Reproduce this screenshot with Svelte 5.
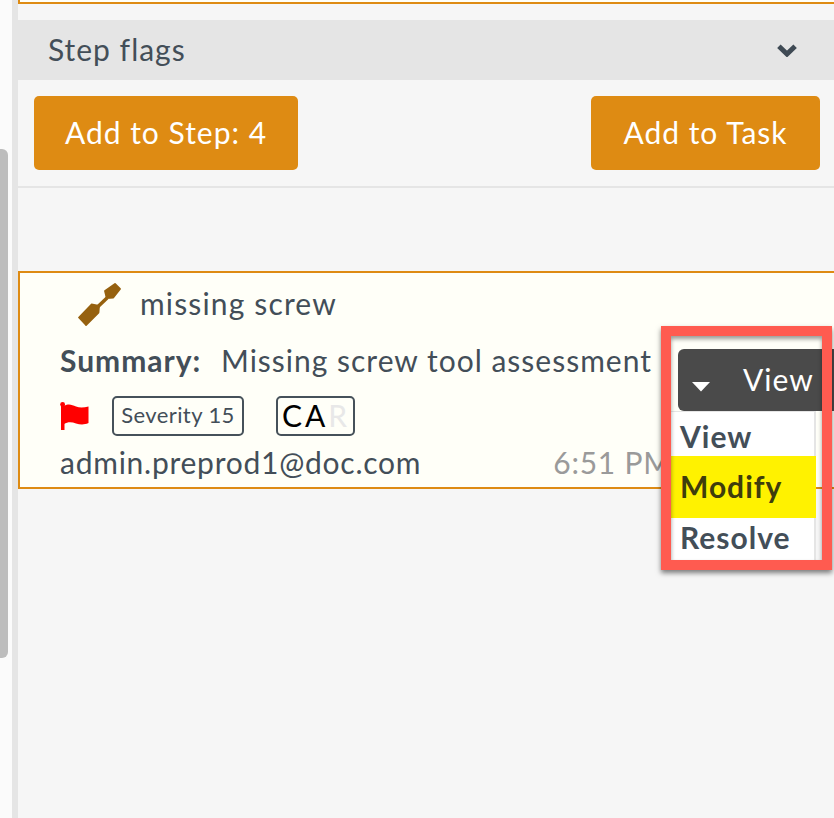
<script>
  const menuItems = ['View', 'Modify', 'Resolve']
</script>

<div class="page">
  <aside class="rail">
    <div class="scroll-thumb"></div>
  </aside>

  <main class="panel">
    <div class="prev-card"></div>

    <header class="section-head">
      <span>Step flags</span>
      <svg class="chevron" viewBox="0 0 20 14" width="20" height="14" aria-hidden="true">
        <path d="M1.9 3.2 L10 11 L18.1 3.2" fill="none" stroke="#3f4a54" stroke-width="5" />
      </svg>
    </header>

    <div class="actions">
      <button type="button" class="btn-add step">Add to Step: 4</button>
      <button type="button" class="btn-add task">Add to Task</button>
    </div>

    <section class="flag-card">
      <div class="title-row">
        <svg class="tool" viewBox="0 0 44 44" width="44" height="44" aria-hidden="true">
          <path d="M1 34.5 L13.5 21.5 L21 23 L20.5 29.5 L8 42 Z" fill="#96610f" stroke="#96610f" stroke-width="1.8" stroke-linejoin="round" />
          <path d="M19 24.5 L29 15" stroke="#96610f" stroke-width="3.6" />
          <path d="M27 8 L37 1 L42 6 L35.3 14.5 L28.7 15 Z" fill="#96610f" stroke="#96610f" stroke-width="1.8" stroke-linejoin="round" />
        </svg>
        <span>missing screw</span>
      </div>

      <p class="summary"><strong>Summary:</strong> Missing screw tool assessment</p>

      <div class="tags">
        <svg class="flag" viewBox="0 0 29 29" width="29" height="29" aria-hidden="true">
          <path d="M1 2 H4.5 V28 H1 Z" fill="#ff0000" />
          <circle cx="2.6" cy="2.4" r="2.4" fill="#ff0000" />
          <path d="M4 4 C9 1 12 3 16 4.5 C20 6 24 5.5 28.5 4.5 V21 C24 23 20 22.5 16 21.5 C12 20 8 19.5 4 22 Z" fill="#ff0000" />
        </svg>
        <span class="severity">Severity 15</span>
        <span class="car">CA<span class="off">R</span></span>
      </div>

      <div class="meta">
        <span class="author">admin.preprod1@doc.com</span>
        <span class="time">6:51 PM</span>
      </div>

      <div class="dropdown">
        <button type="button" class="view-btn">
          <svg viewBox="0 0 18 10" width="18" height="10" aria-hidden="true">
            <path d="M0 0 H18 L9 9.5 Z" fill="#fff" />
          </svg>
          <span>View</span>
        </button>
        <ul class="menu">
          {#each menuItems as item}
            <li class:active={item === 'Modify'}>{item}</li>
          {/each}
        </ul>
      </div>

      <div class="callout"></div>
    </section>
  </main>
</div>

<style>
  :global(body) {
    background: #f6f6f6;
  }

  .page {
    display: flex;
    height: 818px;
    width: 834px;
    overflow: hidden;
    font-family: Lato, "Open Sans", sans-serif;
    font-size: 30px;
    letter-spacing: 1px;
    color: #434e58;
  }

  .rail {
    flex: none;
    width: 12px;
    padding-top: 149px;
    background: #fbfbfb;
    border-right: 6px solid #e5e5e5;
  }

  .scroll-thumb {
    width: 8px;
    height: 509px;
    background: #bdbdbd;
    border-radius: 0 6px 6px 0;
  }

  .panel {
    flex: 1;
    min-width: 0;
    background: #f6f6f6;
  }

  .prev-card {
    height: 2px;
    margin-bottom: 16px;
    background: #fffff8;
    border-left: 2px solid #de8b13;
    border-bottom: 2px solid #de8b13;
  }

  .section-head {
    display: flex;
    align-items: center;
    justify-content: space-between;
    box-sizing: border-box;
    height: 60px;
    padding: 0 37px 3px 30px;
    background: #e5e5e5;
  }

  .chevron {
    margin-top: 3px;
  }

  .actions {
    display: flex;
    justify-content: space-between;
    padding: 16px 14px 16px 16px;
    border-bottom: 2px solid #e5e5e5;
  }

  .btn-add {
    height: 74px;
    padding: 0 0 3px;
    border: none;
    border-radius: 5px;
    background: #de8b13;
    color: #fff;
    font-family: inherit;
    font-size: inherit;
    letter-spacing: inherit;
  }

  .btn-add.step {
    width: 264px;
  }

  .btn-add.task {
    width: 229px;
  }

  .flag-card {
    position: relative;
    box-sizing: border-box;
    height: 218px;
    margin-top: 83px;
    margin-right: -10px;
    padding: 12px 0 0 40px;
    background: #fffff8;
    border: 2px solid #de8b13;
  }

  .title-row {
    display: flex;
    align-items: center;
    gap: 18px;
    height: 40px;
    margin-left: 18px;
  }

  .title-row span {
    margin-top: -5px;
    letter-spacing: 1.15px;
  }

  .tool {
    flex: none;
  }

  .summary {
    margin: 15px 0 0;
    height: 40px;
    line-height: 40px;
    white-space: nowrap;
  }

  .summary strong {
    margin-right: 11px;
    font-weight: 700;
  }

  .tags {
    display: flex;
    align-items: center;
    height: 40px;
    margin-top: 16px;
  }

  .flag {
    flex: none;
    margin-right: 23px;
  }

  .severity {
    box-sizing: border-box;
    width: 132px;
    height: 40px;
    line-height: 33px;
    text-align: center;
    border: 2px solid #46515a;
    border-radius: 5px;
    font-size: 22px;
    letter-spacing: 0.4px;
  }

  .car {
    box-sizing: border-box;
    width: 79px;
    height: 40px;
    margin-left: 32px;
    padding-left: 4px;
    line-height: 34px;
    border: 2px solid #46515a;
    border-radius: 5px;
    font-size: 30px;
    letter-spacing: 3px;
    color: #000;
    white-space: nowrap;
  }

  .off {
    color: #e8e8e8;
  }

  .meta {
    display: flex;
    gap: 132px;
    height: 40px;
    margin-top: 6px;
    line-height: 40px;
    letter-spacing: 0.75px;
    white-space: nowrap;
  }

  .time {
    color: #9a9a9a;
  }

  .dropdown {
    position: absolute;
    top: 76px;
    left: 651px;
    z-index: 1;
  }

  .view-btn {
    display: flex;
    align-items: center;
    box-sizing: border-box;
    width: 180px;
    height: 62px;
    margin-left: 7px;
    padding: 0 0 3px 14px;
    border: none;
    border-radius: 6px;
    background: #4a4a4a;
    color: #fff;
    font-family: inherit;
    font-size: inherit;
    letter-spacing: inherit;
    text-align: left;
  }

  .view-btn svg {
    margin-top: 17px;
  }

  .view-btn span {
    margin-left: 33px;
  }

  .menu {
    box-sizing: border-box;
    width: 145px;
    height: 149px;
    margin: 0;
    padding: 0;
    list-style: none;
    background: #fff;
    border-right: 2px solid #e5e5e5;
    border-top: 1px solid #e5e5e5;
    font-weight: 700;
  }

  .menu li {
    box-sizing: border-box;
    height: 44px;
    padding-left: 9px;
    line-height: 48px;
  }

  .menu li.active {
    width: 145px;
    height: 62px;
    line-height: 60px;
    background: #fff200;
    color: #3f3d0c;
  }

  .menu li:last-child {
    line-height: 38px;
  }

  .callout {
    position: absolute;
    top: 53px;
    left: 641px;
    z-index: 2;
    box-sizing: border-box;
    width: 171px;
    height: 244px;
    border: 10px solid #ff5b50;
    box-shadow: 0 3px 5px rgba(0, 0, 0, 0.5), inset 0 3px 4px rgba(0, 0, 0, 0.4);
    pointer-events: none;
  }
</style>
